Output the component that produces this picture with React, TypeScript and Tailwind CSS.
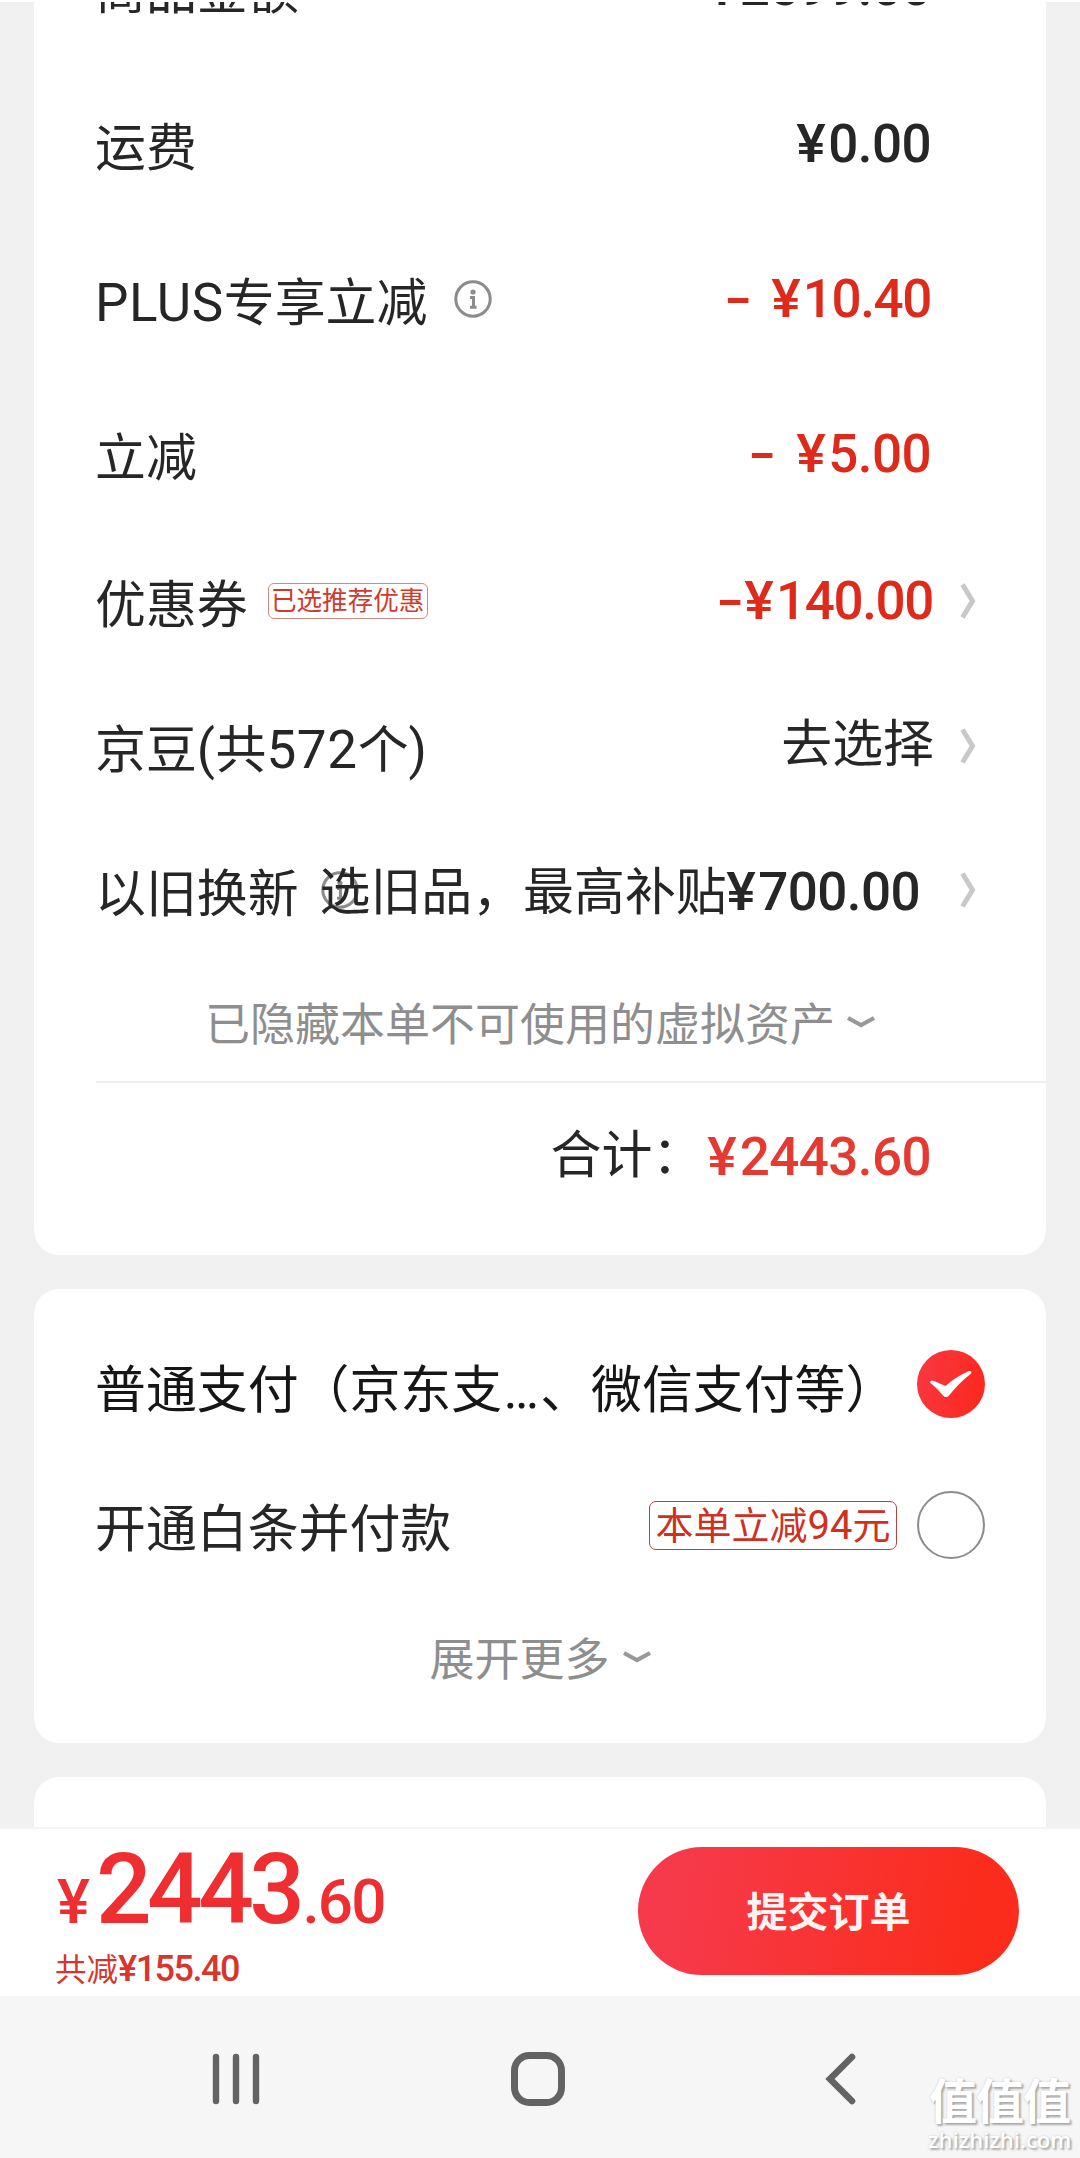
import type { ReactNode } from "react";

interface PriceRowProps {
    label: ReactNode;
    value: ReactNode;
    className: string;
    arrow?: boolean;
}

const InfoIcon = ({ className = "" }: { className?: string }) => (
    <svg width="38" height="38" viewBox="0 0 38 38" fill="none" className={className}>
        <circle cx="19" cy="19" r="17.2" stroke="#8c8c8c" strokeWidth="3" />
        <circle cx="19" cy="12" r="2.6" fill="#8c8c8c" />
        <path d="M16 17.5H19.5V27M16 27.3H22.6" stroke="#8c8c8c" strokeWidth="3" />
    </svg>
);

const ArrowRight = () => (
    <svg width="16" height="36" viewBox="0 0 16 36" fill="none" className="shrink-0">
        <path d="M2.5 1.5L12.5 18L2.5 34.5" stroke="#c8c8c8" strokeWidth="5" />
    </svg>
);

const ArrowDown = () => (
    <svg width="28" height="12" viewBox="0 0 28 12" fill="none" className="shrink-0">
        <path d="M1 2L14 9L27 2" stroke="#999999" strokeWidth="4.2" />
    </svg>
);

const Latin = ({ children }: { children: ReactNode }) => (
    <span className="font-['Roboto',sans-serif] text-[53px] leading-none tracking-[0.6px]">{children}</span>
);

interface MoneyProps {
    amount: string;
    // "tight" sets the minus right before the sign, "loose" leaves a gap
    minus?: "tight" | "loose";
    className?: string;
}

const Money = ({ amount, minus, className = "" }: MoneyProps) => (
    <span
        className={`font-['Roboto',sans-serif] font-medium text-[53px] leading-[60px] tracking-[-0.6px] whitespace-nowrap ${className}`}
    >
        {minus && (
            <span className={`inline-block scale-x-150 ${minus === "loose" ? "mr-[26px]" : "mr-[8px]"}`}>-</span>
        )}
        <span className="inline-block scale-x-105 mr-[4px]">¥</span>
        {amount}
    </span>
);

const PriceRow = ({ label, value, className, arrow }: PriceRowProps) => {
    return (
        <div className={`flex items-center justify-between pl-[61px] ${className}`}>
            <div className="flex items-center">{label}</div>
            {arrow ? (
                <div className="flex items-center pr-[70px]">
                    {value}
                    <ArrowRight />
                </div>
            ) : (
                <div className="flex items-center pr-[115px]">{value}</div>
            )}
        </div>
    );
};

const PriceCard = () => {
    return (
        <section className="bg-white rounded-b-[25px] h-[1343px] mt-[-90px]">
            <PriceRow className="h-[149px] mb-[6px]" label="商品金额" value={<Money amount="2599.00" />} />
            <PriceRow className="h-[154px]" label="运费" value={<Money amount="0.00" />} />
            <PriceRow
                className="h-[155px]"
                label={
                    <>
                        <span className="pt-[2px]">
                            <Latin>PLUS</Latin>专享立减
                        </span>
                        <InfoIcon className="ml-[27px]" />
                    </>
                }
                value={<Money className="text-[#dd2a1b] tracking-[-1.4px]" minus="loose" amount="10.40" />}
            />
            <PriceRow
                className="h-[154px]"
                label={<span className="pt-[2px]">立减</span>}
                value={<Money className="text-[#dd2a1b] pt-[1px]" minus="loose" amount="5.00" />}
            />
            <PriceRow
                className="h-[142px]"
                arrow
                label={
                    <>
                        <span>优惠券</span>
                        <span className="ml-[20px] w-[160px] h-[36px] border border-[#d08a83] rounded-[6px] text-[25.6px] leading-[30px] text-center text-[#cf3a2c] whitespace-nowrap">
                            已选推荐优惠
                        </span>
                    </>
                }
                value={<Money className="text-[#dd2a1b] mr-[27px] tracking-[-1.4px]" minus="tight" amount="140.00" />}
            />
            <PriceRow
                className="h-[147px]"
                arrow
                label={
                    <span className="pt-[2px]">
                        京豆<Latin>(</Latin>共<Latin>572</Latin>个<Latin>)</Latin>
                    </span>
                }
                value={<span className="mr-[26px] pb-[12px]">去选择</span>}
            />
            <PriceRow
                className="h-[141px]"
                arrow
                label={
                    <>
                        <span>以旧换新</span>
                        <InfoIcon className="ml-[22px] mr-[-60px]" />
                    </>
                }
                value={
                    <span className="relative mr-[40px]">
                        选旧品，最高补贴<Money amount="700.00" />
                    </span>
                }
            />
            <div className="flex items-center justify-center gap-[12px] h-[121px] pt-[2px] text-[45px] text-[#8e8e8e]">
                已隐藏本单不可使用的虚拟资产
                <ArrowDown />
            </div>
            <div className="ml-[62px] h-[2px] bg-[#eeeeee]" />
            <div className="flex items-start justify-end pt-[38px] pr-[115px]">
                <span className="mr-[5px]">合计：</span>
                <Money className="text-[#e43a31] pt-[6px]" amount="2443.60" />
            </div>
        </section>
    );
};

const PayCard = () => {
    return (
        <section className="flex flex-col bg-white rounded-[25px] h-[454px] mt-[34px] pl-[61px] pr-[61px]">
            <div className="flex items-center justify-between h-[68px] mt-[61px] text-[#161616]">
                <span className="pt-[4px] whitespace-nowrap">
                    普通支付（京东支
                    <span className="inline-block w-[38px] font-['Roboto',sans-serif] text-[53px] leading-none text-center">…</span>
                    、微信支付等）
                </span>
                <svg width="68" height="68" viewBox="0 0 68 68" className="shrink-0">
                    <defs>
                        <linearGradient id="tick" x1="0" y1="0" x2="1" y2="0.3">
                            <stop offset="0" stopColor="#fa3844" />
                            <stop offset="1" stopColor="#fb2a20" />
                        </linearGradient>
                    </defs>
                    <circle cx="34" cy="34" r="34" fill="url(#tick)" />
                    <path
                        d="M13 32.5Q13.5 29.5 17 31L28.5 36Q39 26.5 52 21Q56 21 53.5 24Q42 33 32 45.5Q29 48.5 26 45.5Q21 39 13 32.5Z"
                        fill="#ffffff"
                    />
                </svg>
            </div>
            <div className="flex items-center h-[68px] mt-[73px]">
                <span>开通白条并付款</span>
                <span className="ml-auto w-[248px] h-[49px] border border-[#b5453c] rounded-[7px] text-[38px] leading-[41px] text-center text-[#d0301f]">
                    本单立减<span className="font-['Roboto',sans-serif] text-[40px] leading-none">94</span>元
                </span>
                <span className="ml-[20px] size-[68px] rounded-full border-2 border-[#8c8c8c]" />
            </div>
            <div className="flex items-center justify-center gap-[13px] mt-[68px] h-[60px] text-[45px] text-[#8e8e8e]">
                展开更多
                <ArrowDown />
            </div>
        </section>
    );
};

const SubmitBar = () => {
    return (
        <div className="flex items-start justify-between h-[169px] shrink-0 bg-white border-t-2 border-[#f4f4f4] pl-[55px] pr-[61px]">
            <div className="flex flex-col">
                <div className="flex items-baseline font-['Roboto',sans-serif] font-medium text-[#ee2e31] leading-[100px] h-[118px] pt-[11px]">
                    <span className="text-[62px] w-[41px] pl-[2px]">¥</span>
                    <span className="text-[98px] tracking-[-4.6px]">2443</span>
                    <span className="text-[62px] tracking-[-1.8px] pl-[2px]">.60</span>
                </div>
                <div className="flex items-baseline text-[31.5px] leading-[40px] h-[40px] text-[#d8362c]">
                    共减
                    <span className="font-['Roboto',sans-serif] font-medium text-[36px] tracking-[-1.5px]">¥155.40</span>
                </div>
            </div>
            <button className="w-[381px] h-[128px] mt-[18px] pb-[4px] rounded-full bg-linear-[100deg,#f63a4b_10%,#fb2c1b_88%] text-[41px] font-bold text-[#fff4f2]">
                提交订单
            </button>
        </div>
    );
};

const NavBar = () => {
    return (
        <nav className="relative flex items-center h-[162px] pt-[3px] shrink-0 bg-[#f6f6f6]">
            <svg width="48" height="52" viewBox="0 0 48 52" className="ml-[212px]">
                <path d="M4 4V48M24 4V48M44 4V48" stroke="#636363" strokeWidth="6.4" strokeLinecap="round" />
            </svg>
            <svg width="56" height="56" viewBox="0 0 56 56" fill="none" className="ml-[250px]">
                <rect x="4.5" y="4.5" width="47" height="47" rx="15" stroke="#636363" strokeWidth="7" />
            </svg>
            <svg width="32" height="52" viewBox="0 0 32 52" fill="none" className="ml-[259px]">
                <path d="M27 4L5 26L27 48" stroke="#636363" strokeWidth="6.6" strokeLinecap="round" />
            </svg>
            {/* site mark stamped over the corner */}
            <div className="absolute right-[9px] bottom-[6px] w-[143px] text-center text-white [text-shadow:2px_2px_2px_#aaaaaa,0_0_2px_#c4c4c4]">
                <div className="text-[48px] font-bold leading-[50px] tracking-[-1px] pb-[3px]">值值值</div>
                <div className="font-['Open_Sans',sans-serif] font-semibold text-[22px] leading-[26px]">zhizhizhi.com</div>
            </div>
        </nav>
    );
};

export default function App() {
    return (
        <div className="flex flex-col w-[1080px] h-[2158px] overflow-hidden bg-[#f1f1f1] font-['Noto_Sans_CJK_SC',sans-serif] text-[50.9px] leading-[60px] text-[#262626]">
            <main className="h-[1827px] shrink-0 overflow-hidden border-t-2 border-white px-[34px]">
                <PriceCard />
                <PayCard />
                <section className="bg-white rounded-t-[25px] h-[60px] mt-[34px]" />
            </main>
            <SubmitBar />
            <NavBar />
        </div>
    );
}
